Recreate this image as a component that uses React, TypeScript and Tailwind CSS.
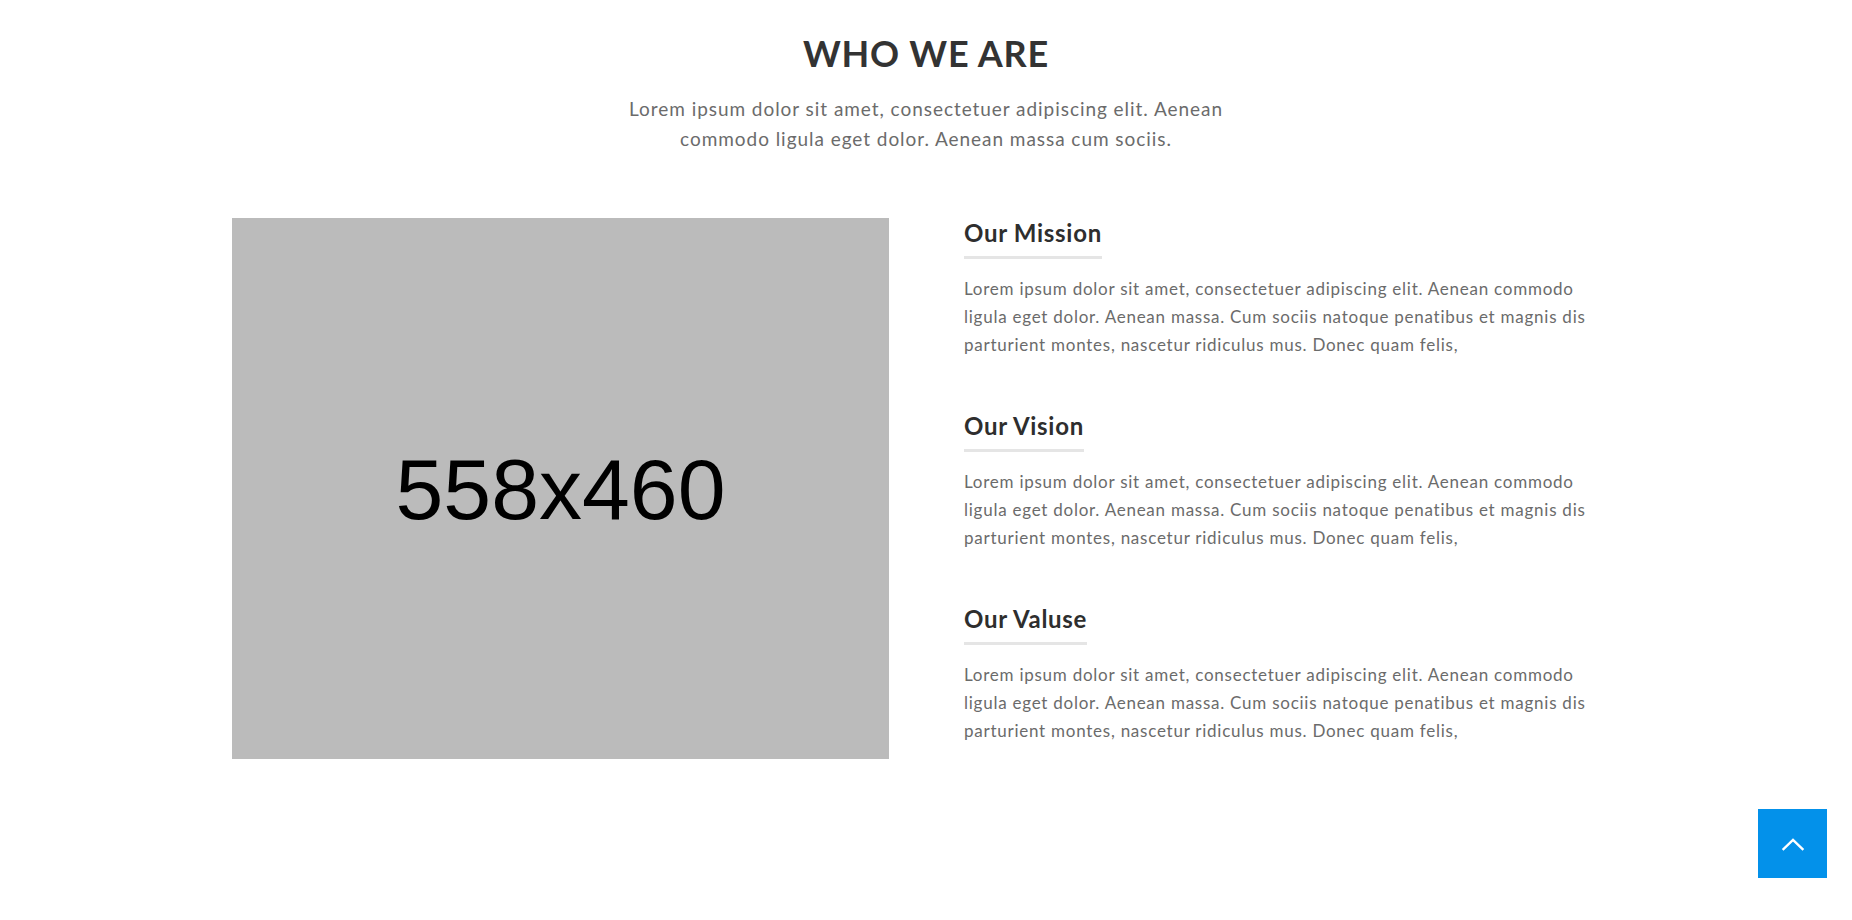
import React from "react";

const body =
  "text-[17px] leading-[28px] tracking-[0.75px] text-[#6b6b6b] font-normal";

function Block({ title, first }: { title: string; first?: boolean }) {
  return (
    <div className={first ? "" : "mt-[53px]"}>
      <h3 className="inline-block border-b-[3px] border-[#e5e5e5] pb-[8px] text-[24px] leading-[1.2] tracking-[0.7px] font-bold text-[#2e2e2e]">
        {title}
      </h3>
      <p className={`mt-[16px] ${body}`}>
        Lorem ipsum dolor sit amet, consectetuer adipiscing elit. Aenean commodo
        <br />
        ligula eget dolor. Aenean massa. Cum sociis natoque penatibus et magnis dis
        <br />
        parturient montes, nascetur ridiculus mus. Donec quam felis,
      </p>
    </div>
  );
}

export default function App() {
  return (
    <div
      className="relative min-h-[920px] w-full bg-white"
      style={{ fontFamily: "Lato, 'Open Sans', sans-serif" }}
    >
      <section className="pt-[32px]">
        <h2 className="text-center text-[36px] leading-[1.2] tracking-[0.8px] font-bold text-[#333333]">
          WHO WE ARE
        </h2>
        <p className="mt-[19px] text-center text-[19px] leading-[30px] tracking-[0.95px] text-[#6b6b6b]">
          Lorem ipsum dolor sit amet, consectetuer adipiscing elit. Aenean
          <br />
          commodo ligula eget dolor. Aenean massa cum sociis.
        </p>
        <div className="mt-[64px] ml-[232px] flex">
          <div className="flex h-[541px] w-[657px] shrink-0 items-center justify-center bg-[#bbbbbb]">
            <span
              className="text-[86px] leading-none text-black"
              style={{ fontFamily: "'Liberation Sans', Arial, sans-serif" }}
            >
              558x460
            </span>
          </div>
          <div className="ml-[75px] w-[680px] pt-[1px]">
            <Block title="Our Mission" first />
            <Block title="Our Vision" />
            <Block title="Our Valuse" />
          </div>
        </div>
      </section>
      <button className="fixed right-[25px] bottom-[42px] flex h-[69px] w-[69px] items-center justify-center bg-[#0391ea]">
        <svg width="24" height="14" viewBox="0 0 24 14" fill="none">
          <polyline
            points="2.5,12 12,3 21.5,12"
            stroke="white"
            strokeWidth="2.4"
            strokeLinecap="square"
          />
        </svg>
      </button>
    </div>
  );
}
